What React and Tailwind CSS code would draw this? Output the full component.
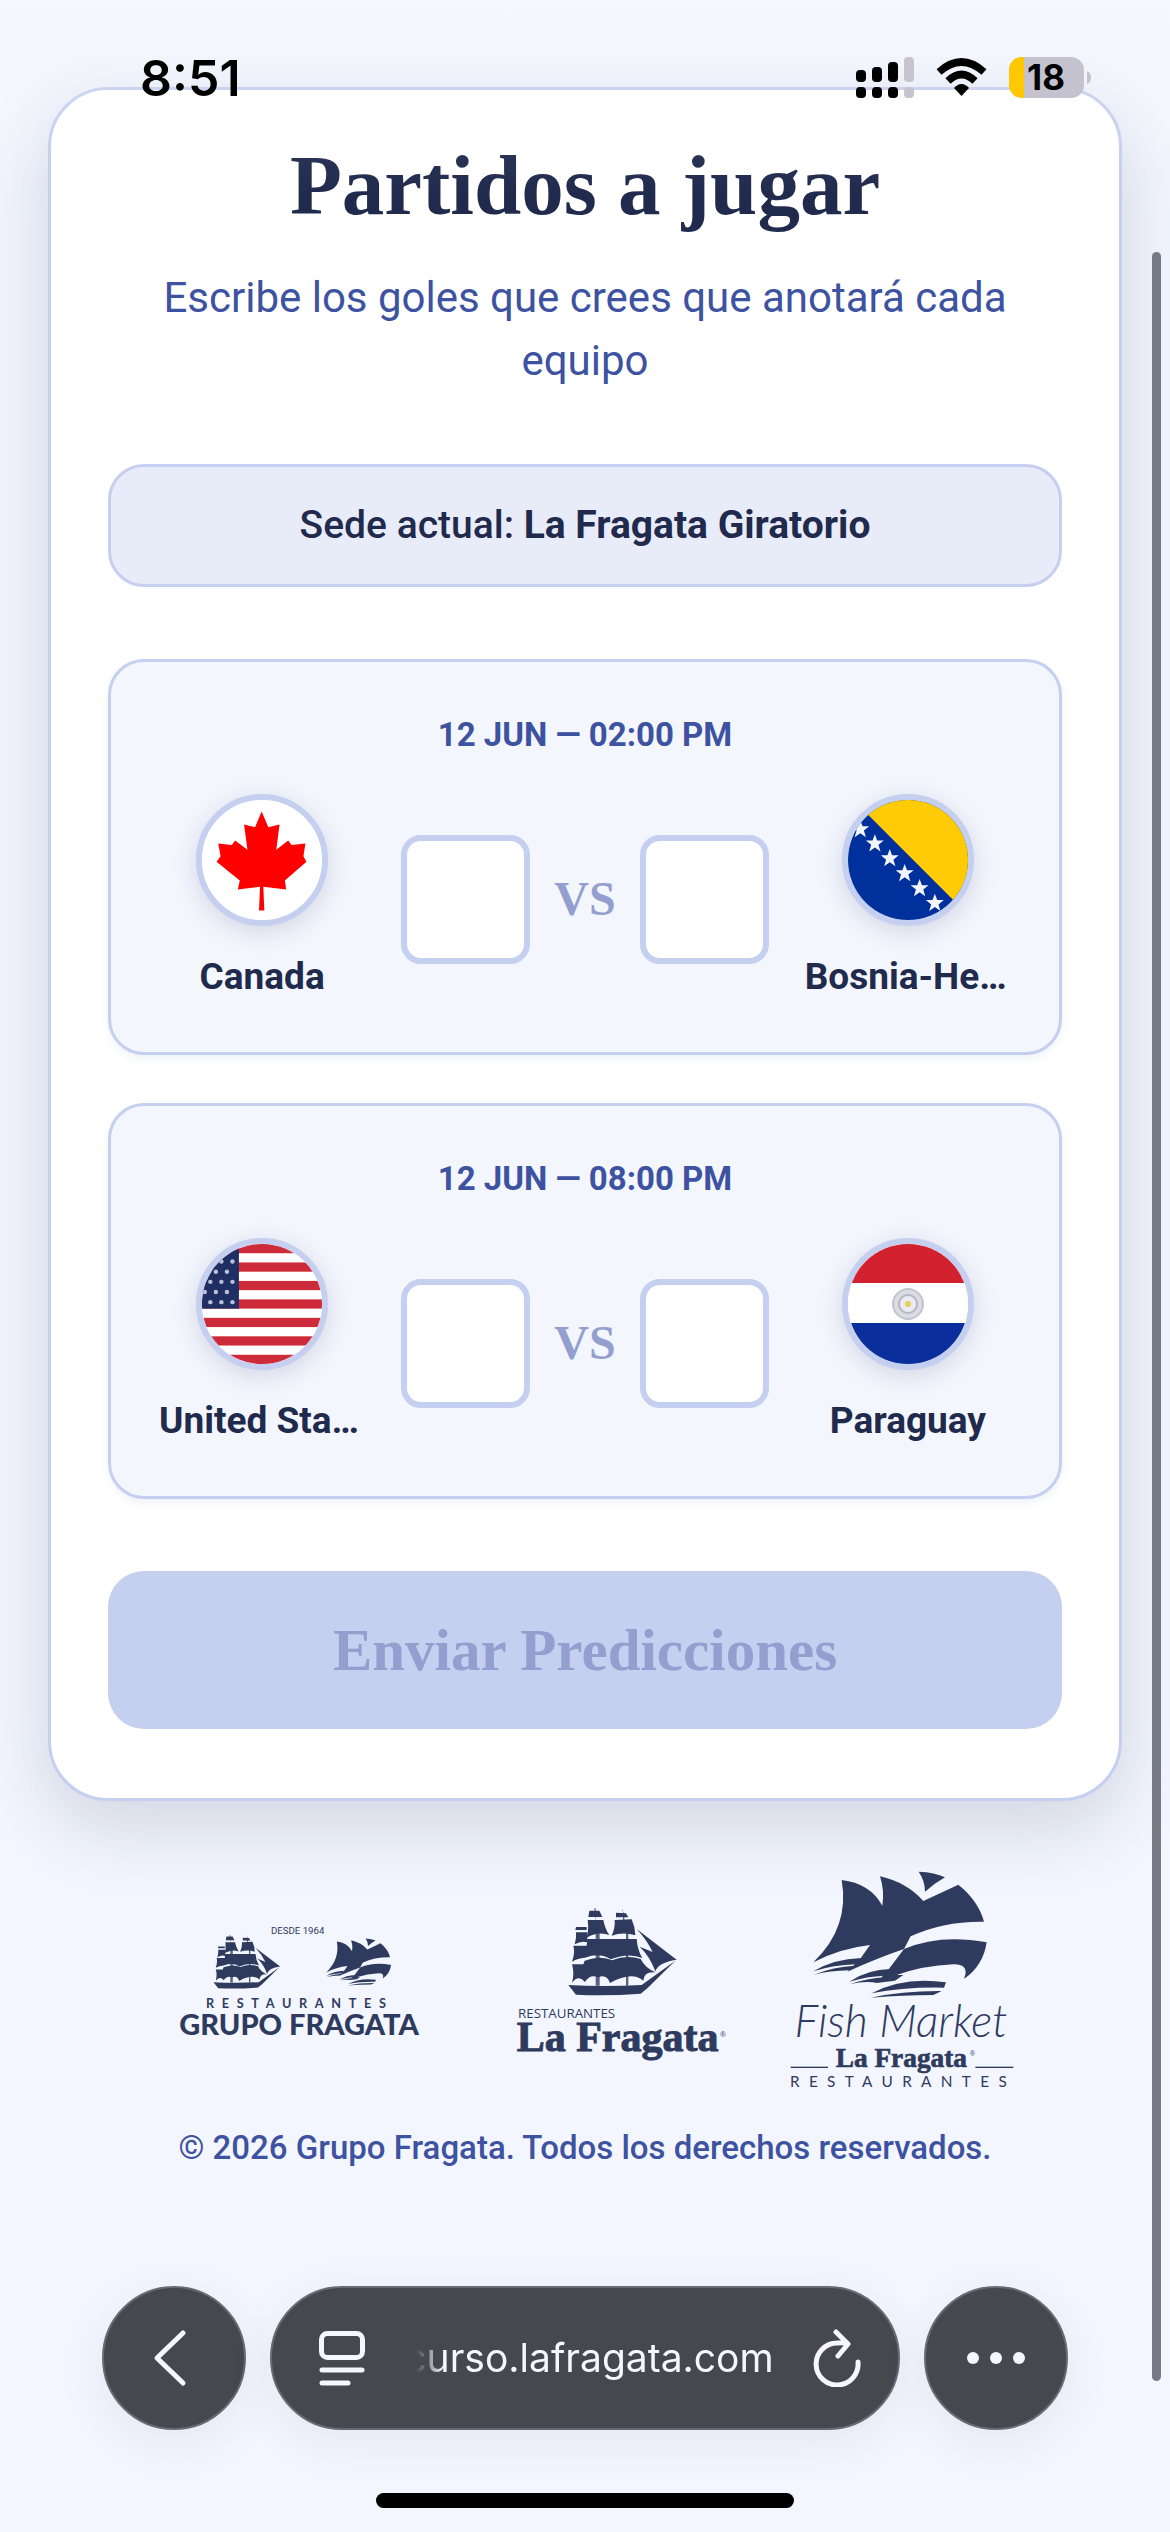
import React, { useState } from "react";

const NAVY = "#2f3b5e";

const STARS = [
    [118, 150],
    [162, 193],
    [207, 238],
    [252, 283],
    [297, 328],
    [343, 373],
];

const CanadaFlag = () => (
    <svg viewBox="68 63 362 360" className="w-full h-full" aria-hidden="true">
        <rect x="68" y="63" width="362" height="360" fill="#fff" />
        <path
            d="M248 97L268 144L302 136L292 212L328 184L338 198L380 193L374 232L383 248L318 305L322 332L253 324L256 395H240L243 324L176 332L182 305L112 248L124 232L117 193L158 198L168 184L205 212L195 136L228 144Z"
            fill="#fe0000"
        />
    </svg>
);

const BosniaFlag = () => (
    <svg viewBox="81 62 362 362" className="w-full h-full" aria-hidden="true">
        <rect x="81" y="62" width="362" height="362" fill="#00309c" />
        <path d="M97 62H443V408Z" fill="#ffcb05" />
        {STARS.map(([x, y]) => (
            <path
                key={x}
                transform={`translate(${x} ${y})`}
                d="M0 -28L7 -9L27 -9L11 4L17 24L0 12L-17 24L-11 4L-27 -9L-7 -9Z"
                fill="#f4f6ff"
            />
        ))}
    </svg>
);

const UsaFlag = () => (
    <svg viewBox="0 0 130 130" className="w-full h-full" aria-hidden="true">
        <rect width="130" height="130" fill="#fff" />
        {[0, 20, 40, 60, 80, 100, 120].map((y) => (
            <rect key={y} y={y} width="130" height="10" fill="#cd2a3a" />
        ))}
        <rect width="40" height="70" fill="#1f2f63" />
        {[8, 19, 30, 41, 52, 63].map((y, row) =>
            [3, 15, 27].map((x) => (
                <circle
                    key={x + "-" + y}
                    cx={x + (row % 2 ? 6 : 0)}
                    cy={y}
                    r="2.4"
                    fill="#b9c0d8"
                />
            ))
        )}
    </svg>
);

const ParaguayFlag = () => (
    <svg viewBox="0 0 120 120" className="w-full h-full" aria-hidden="true">
        <rect width="120" height="120" fill="#fff" />
        <rect width="120" height="39" fill="#d3222f" />
        <rect y="79" width="120" height="41" fill="#0a2f9c" />
        <circle cx="60" cy="60" r="15" fill="#dcdbe2" stroke="#c4c3d2" strokeWidth="2" />
        <circle cx="60" cy="60" r="9" fill="#ececf0" stroke="#b3b6c8" strokeWidth="2" />
        <circle cx="60" cy="60" r="3" fill="#e3cf5c" />
    </svg>
);

const Ship = () => (
    <g fill={NAVY}>
        <path d="M235 318Q340 324 455 318L556 245L472 328L452 344Q350 352 258 347Z" />
        <path d="M246 256H280L284 245Q335 228 366 244Q410 226 452 240Q466 268 497 280Q462 276 460 305Q425 276 360 312Q350 284 325 295Q300 284 285 309Q266 286 246 311Q254 280 246 256Z" />
        <path d="M292 180H440Q442 212 457 237Q415 220 362 241Q330 220 285 236Q262 238 246 248Q256 220 250 200H290Z" />
        <path d="M293 123H340Q345 150 358 168Q325 156 290 176Q297 150 293 123Z" />
        <path d="M298 95H328L337 114H295Z" />
        <path d="M374 123L425 121Q436 145 436 169Q400 157 365 170Q376 145 374 123Z" />
        <path d="M378 101L408 103L415 115H378Z" />
        <path d="M258 144H290V153H256Z" />
        <path d="M258 160H292V190Q275 184 254 196Q260 178 258 160Z" />
        <path d="M440 150L560 242Q505 250 496 277Q480 232 449 203L488 219Q472 185 440 150Z" />
        <path d="M313 88H317V320H329V160H320ZM396 92H399V124H408V320H415V160H403V104Z" opacity=".8" />
    </g>
);

const FishShip = () => (
    <g fill={NAVY}>
        <path d="M245 93Q330 103 367 170Q374 125 360 82Q440 100 490 156L595 107Q655 155 672 218Q550 216 452 262L432 300Q350 328 262 368L302 328L330 288Q240 298 160 340Q270 235 245 93Z" />
        <path d="M476 68Q525 70 555 85Q525 102 495 128Q495 95 476 68Z" />
        <path d="M432 300Q540 254 680 280Q670 350 612 390Q630 345 580 346Q490 350 410 378H430L405 395L350 402L385 362Z" />
        <path d="M160 367Q220 330 304 327L288 346Q220 348 160 367Z" />
        <path d="M162 377Q220 353 285 350L268 364Q210 365 162 377Z" />
        <path d="M268 398Q320 362 392 360L374 380Q320 382 268 398Z" />
        <path d="M270 405Q320 388 376 385L352 402Q320 394 270 405Z" />
        <path d="M335 433Q430 382 558 400L552 416Q430 414 335 433Z" />
        <path d="M332 446Q430 425 545 426L520 438Q430 438 332 446Z" />
    </g>
);

const GrupoLogo = () => (
    <svg viewBox="-18 60 798 666" className="w-[266px] min-w-0" role="img" aria-label="Grupo Fragata">
        <g transform="translate(16 204) scale(.615)">
            <Ship />
        </g>
        <g transform="translate(439 243) scale(.374)">
            <FishShip />
        </g>
        <g fill={NAVY}>
            <text x="413" y="254" textAnchor="middle" fontSize="29" fontFamily="Roboto, sans-serif">
                DESDE 1964
            </text>
            <text x="138" y="478" fontSize="38" letterSpacing="23" fontFamily="Lato, sans-serif" fontWeight="700">
                RESTAURANTES
            </text>
            <text x="417" y="559" textAnchor="middle" fontSize="87" fontFamily="Lato, sans-serif" fontWeight="900">
                GRUPO FRAGATA
            </text>
        </g>
    </svg>
);

const FragataLogo = () => (
    <svg viewBox="-18 -30 726 666" className="w-[242px] min-w-0" role="img" aria-label="Restaurantes La Fragata">
        <Ship />
        <g fill={NAVY}>
            <text x="84" y="417" fontSize="40" fontFamily="'Open Sans', sans-serif">
                RESTAURANTES
            </text>
            <text x="80" y="516" fontSize="126" fontFamily="'Liberation Serif', serif" fontWeight="700" stroke={NAVY} strokeWidth="3">
                La Fragata
            </text>
            <text x="690" y="473" fontSize="24" fontFamily="'Liberation Sans', sans-serif">
                ®
            </text>
        </g>
    </svg>
);

const FishMarketLogo = () => (
    <svg viewBox="90 60 678 666" className="w-[226px] min-w-0" role="img" aria-label="Fish Market La Fragata">
        <FishShip />
        <g fill={NAVY}>
            <text x="423" y="563" textAnchor="middle" fontSize="134" fontFamily="Lato, sans-serif" fontStyle="italic" fontWeight="300">
                Fish Market
            </text>
            <text x="424" y="654" textAnchor="middle" fontSize="82" fontFamily="'Liberation Serif', serif" fontWeight="700" stroke={NAVY} strokeWidth="2">
                La Fragata
            </text>
            <text x="630" y="620" fontSize="20" fontFamily="'Liberation Sans', sans-serif">
                ®
            </text>
            <rect x="92" y="653" width="112" height="4" />
            <rect x="646" y="653" width="114" height="4" />
            <text x="90" y="713" fontSize="46" letterSpacing="28" fontFamily="Lato, sans-serif">
                RESTAURANTES
            </text>
        </g>
    </svg>
);

const matches = [
    {
        id: 1,
        date: "12 JUN — 02:00 PM",
        home: { name: "Canada", flag: <CanadaFlag /> },
        away: { name: "Bosnia-Herzegovina", flag: <BosniaFlag /> },
    },
    {
        id: 2,
        date: "12 JUN — 08:00 PM",
        home: { name: "United States", flag: <UsaFlag /> },
        away: { name: "Paraguay", flag: <ParaguayFlag /> },
    },
];

const Team = ({ team }) => (
    <div className="flex flex-1 min-w-0 flex-col items-center">
        <div className="size-[132px] overflow-hidden rounded-full border-6 border-[#c5cfef] bg-white shadow-[0_6px_24px_rgba(47,59,94,0.16)]">
            {team.flag}
        </div>
        <p className="mt-6 w-full truncate text-center text-[37px] leading-[54px] font-bold text-[#1f2a4d]">
            {team.name}
        </p>
    </div>
);

const ScoreInput = ({ label, value, onChange }) => (
    <input
        type="text"
        inputMode="numeric"
        aria-label={label}
        value={value}
        onChange={(e) => onChange(e.target.value)}
        className="size-[129px] rounded-[20px] border-6 border-[#c5cfef] bg-white text-center text-5xl font-bold text-[#1f2a4d] outline-none"
    />
);

const MatchCard = ({ match }) => {
    const [home, setHome] = useState("");
    const [away, setAway] = useState("");

    return (
        <section className="rounded-[36px] border-3 border-[#c5cfef] bg-[#f3f6fd] p-12 shadow-[0_4px_8px_rgba(61,82,160,0.07)]">
            <p className="text-center text-[33px] leading-[50px] font-bold text-[#3d52a0]">
                {match.date}
            </p>
            <div className="mt-[34px] flex items-center gap-9">
                <Team team={match.home} />
                <div className="flex items-center gap-6">
                    <ScoreInput label={`Goles ${match.home.name}`} value={home} onChange={setHome} />
                    <span className="font-['Liberation_Serif',serif] text-[48px] font-bold text-[#929fcf]">
                        VS
                    </span>
                    <ScoreInput label={`Goles ${match.away.name}`} value={away} onChange={setAway} />
                </div>
                <Team team={match.away} />
            </div>
        </section>
    );
};

const StatusBar = () => (
    <div className="absolute inset-x-0 top-0 flex items-start justify-between bg-linear-to-b from-white/20 to-transparent pt-[54px] pr-[79px] pb-24 pl-[140px]">
        <span className="font-[Inter,sans-serif] text-[50px] leading-12 font-semibold text-black">8:51</span>
        <svg viewBox="856 54 235 48" className="h-12 w-[235px]" role="img" aria-label="Batería 18%">
            <g fill="#000">
                <rect x="856" y="70" width="10" height="12" rx="4" />
                <rect x="872" y="67" width="10" height="15" rx="4" />
                <rect x="888" y="62" width="10" height="20" rx="4" />
                <rect x="856" y="87" width="10" height="11" rx="4" />
                <rect x="872" y="87" width="10" height="11" rx="4" />
                <rect x="888" y="87" width="10" height="11" rx="4" />
            </g>
            <g fill="#c7c4d0">
                <rect x="904" y="57" width="10" height="25" rx="4" />
                <rect x="904" y="87" width="10" height="11" rx="4" />
            </g>
            <g fill="none" stroke="#000" strokeWidth="7.5">
                <path d="M939 72Q961.500 52 984 72" />
                <path d="M948 81Q961.500 68 975 81" />
            </g>
            <path d="M954 88Q961.500 80 969 88L961.500 96Z" />
            <rect x="1009" y="57" width="75" height="41" rx="13" fill="#c5c2cf" />
            <path d="M1024 57H1022A13 13 0 0 0 1009 70V85A13 13 0 0 0 1022 98H1024Z" fill="#ffc800" />
            <path d="M1087 71Q1091 73 1091 77.500Q1091 82 1087 84Z" fill="#c5c2cf" />
            <text x="1046" y="90" textAnchor="middle" fontSize="35" fontWeight="700" fontFamily="Inter, sans-serif">
                18
            </text>
        </svg>
    </div>
);

const roundButton =
    "flex size-36 shrink-0 items-center justify-center rounded-full border-2 border-[#696a76] bg-[#47484d] shadow-[0_12px_48px_rgba(47,59,94,0.08)]";

const BrowserBar = () => (
    <div className="absolute inset-x-0 bottom-6 flex flex-col items-center gap-[63px]">
        <div className="flex w-full gap-6 px-[102px]">
            <button className={roundButton} aria-label="Atrás">
                <svg viewBox="0 0 44 60" className="h-[60px] w-11" fill="none" stroke="#f5f7ff" strokeWidth="5" strokeLinecap="round" strokeLinejoin="round">
                    <path d="M31 5L5 30L31 55" />
                </svg>
            </button>
            <div className="flex h-36 min-w-0 flex-1 items-center justify-between rounded-full border-2 border-[#696a76] bg-[#47484d] pr-9 pl-[46px] shadow-[0_12px_48px_rgba(47,59,94,0.08)]">
                <button aria-label="Opciones de página">
                    <svg viewBox="0 0 48 56" className="h-14 w-12" fill="none" stroke="#f5f7ff" strokeWidth="5" strokeLinecap="round">
                        <rect x="3.500" y="3.500" width="41" height="24" rx="6" />
                        <path d="M4 40H44M4 53H30" />
                    </svg>
                </button>
                <button className="mask-[linear-gradient(to_right,transparent_12px,black_40px)] font-[Inter,sans-serif] text-[39px] leading-12 text-[#f5f7ff]">
                    curso.lafragata.com
                </button>
                <button aria-label="Recargar">
                    <svg viewBox="0 0 50 58" className="h-[58px] w-[50px]" fill="none" stroke="#f5f7ff" strokeWidth="5" strokeLinecap="round" strokeLinejoin="round">
                        <path d="M46 33A21 21 0 1 1 25 14Q31 13 36 15M24 3L36 15L26 27" />
                    </svg>
                </button>
            </div>
            <button className={roundButton} aria-label="Más">
                <svg viewBox="0 0 60 14" className="h-3.5 w-[60px]" fill="#f5f7ff">
                    <circle cx="7" cy="7" r="6" />
                    <circle cx="30" cy="7" r="6" />
                    <circle cx="53" cy="7" r="6" />
                </svg>
            </button>
        </div>
        <div className="h-[15px] w-[418px] rounded-full bg-black"></div>
    </div>
);

const App = () => {
    return (
        <div className="relative min-h-screen overflow-hidden bg-[#f3f6fe] px-12 pt-[87px] font-[Roboto,sans-serif]">
            <main className="rounded-[60px] border-3 border-[#c5cfef] bg-white px-[57px] pt-[50px] pb-[69px] shadow-[0_24px_72px_rgba(47,59,94,0.18)]">
                <h1 className="text-center font-['Liberation_Serif',serif] text-[85px] leading-[90px] font-bold text-[#1f2a4d]">
                    Partidos a jugar
                </h1>
                <p className="mt-9 px-8 text-center text-[42px] leading-[63px] text-[#3d52a0]">
                    Escribe los goles que crees que anotará cada equipo
                </p>

                <div className="mt-18 rounded-[36px] border-3 border-[#c5cfef] bg-[#e8ecf8] py-[30px] text-center text-[39px] leading-[57px] font-medium text-[#1f2a4d]">
                    Sede actual: <strong className="font-bold">La Fragata Giratorio</strong>
                </div>

                <form onSubmit={(e) => e.preventDefault()}>
                    <div className="mt-18 flex flex-col gap-12">
                        {matches.map((match) => (
                            <MatchCard key={match.id} match={match} />
                        ))}
                    </div>

                    <button
                        type="submit"
                        disabled
                        className="mt-18 h-[158px] w-full rounded-[36px] bg-[#c5cfef] font-['Liberation_Serif',serif] text-[59px] font-bold text-[#929fcf]"
                    >
                        Enviar Predicciones
                    </button>
                </form>
            </main>

            <footer className="mt-[68px]">
                <div className="flex items-center justify-center gap-x-16">
                    <GrupoLogo />
                    <FragataLogo />
                    <FishMarketLogo />
                </div>
                <p className="mt-8 text-center text-[33px] leading-[50px] font-medium text-[#3d52a0]">
                    © 2026 Grupo Fragata. Todos los derechos reservados.
                </p>
            </footer>

            {/* Scroll indicator */}
            <div className="absolute top-[252px] right-[9px] bottom-[151px] w-[9px] rounded-full bg-[#757a86]"></div>

            <StatusBar />
            <BrowserBar />
        </div>
    );
};

export default App;
